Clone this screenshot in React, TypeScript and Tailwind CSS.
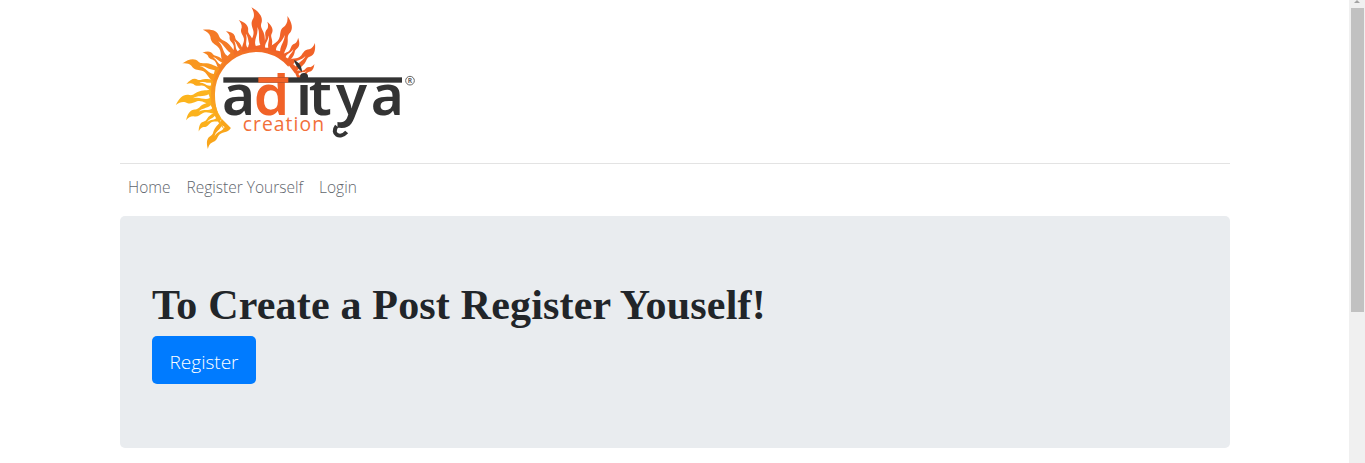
import React from 'react';

// angle from straight up, length scale, colour
const flames = [
  { a: -135, s: 0.95, c: '#f9a51a' },
  { a: -120, s: 0.8, c: '#fbb01c' },
  { a: -107, s: 1.0, c: '#fbb21c' },
  { a: -94, s: 1.2, c: '#fcb41d' },
  { a: -79, s: 0.85, c: '#fbaa1c' },
  { a: -64, s: 1.15, c: '#f9971f' },
  { a: -50, s: 0.75, c: '#f68523' },
  { a: -36, s: 1.25, c: '#f47a25' },
  { a: -23, s: 0.8, c: '#f26f27' },
  { a: -10, s: 1.0, c: '#f16628' },
  { a: 1, s: 1.35, c: '#f16228' },
  { a: 12, s: 0.9, c: '#f16228' },
  { a: 26, s: 1.25, c: '#f16228' },
  { a: 40, s: 0.8, c: '#f16228' },
  { a: 53, s: 1.05, c: '#f16228' },
  { a: 66, s: 0.65, c: '#f16228' },
];

const Logo: React.FC = () => (
  <svg width="270" height="160" viewBox="0 0 810 480">
    <defs>
      <linearGradient id="sunBand" x1="0.9" y1="0" x2="0" y2="0.9">
        <stop offset="0" stopColor="#f16228" />
        <stop offset="0.55" stopColor="#f47f24" />
        <stop offset="1" stopColor="#fcb41d" />
      </linearGradient>
    </defs>
    {flames.map((f, i) => (
      <g key={i} transform={`translate(290 280) rotate(${f.a}) translate(0 -134) scale(${f.s * 1.25} ${f.s})`}>
        <path
          d="M-16 6C-20 -14 -4 -22 -8 -40C-10 -50 -14 -56 -8 -68C-6 -76 -8 -84 -12 -92C2 -82 10 -70 6 -56C4 -46 10 -42 12 -30C14 -18 12 -8 16 6Z"
          fill={f.c}
        />
        <path d="M-3 -6C-8 -20 2 -30 -1 -48C5 -36 0 -24 5 -8Z" fill="#fff" />
      </g>
    ))}
    {/* crescent of the sun */}
    <path
      d="M392 186A142 142 0 1 0 196 392C176 360 164 320 165 280A125 125 0 0 1 385 200Z"
      fill="url(#sunBand)"
    />
    {/* wordmark */}
    <text
      x="186 281 408 446 528 632"
      y="345"
      fontFamily="'Noto Sans', sans-serif"
      fontSize="170"
      fontWeight="600"
      fill="#333333"
    >
      a<tspan fill="#f16228">d</tspan>itya
    </text>
    <rect x="190" y="232" width="536" height="16" fill="#333333" />
    <rect x="295" y="232" width="90" height="16" fill="#f16228" />
    <path d="M402 180C416 186 426 198 426 216C416 208 406 196 402 180Z" fill="#333333" />
    <path d="M560 396C540 418 512 402 530 378" fill="none" stroke="#333333" strokeWidth="12" />
    <text
      x="248"
      y="393"
      textLength="244"
      fontFamily="'Open Sans', sans-serif"
      fontSize="58"
      fill="#f26f3a"
    >
      creation
    </text>
    <circle cx="750" cy="242" r="13" fill="none" stroke="#666666" strokeWidth="3" />
    <text x="750" y="250" textAnchor="middle" fontFamily="'Noto Sans', sans-serif" fontSize="20" fontWeight="700" fill="#666666">
      R
    </text>
  </svg>
);

const App: React.FC = () => {
  return (
    <div className="flex h-[463px] overflow-hidden bg-white font-['Open_Sans',sans-serif]">
      <div className="flex-1">
        <div className="ml-[120px] w-[1110px]">
          <div className="h-[164px] border-b border-[#e3e3e3] pl-[40px]">
            <Logo />
          </div>

          <nav className="mb-1 flex h-12 items-center text-[15.5px] font-light text-[#5f666d]">
            <a className="px-2">Home</a>
            <a className="px-2">Register Yourself</a>
            <a className="px-2">Login</a>
          </nav>

          <div className="rounded-[5px] bg-[#e9ecef] px-8 py-16">
            <h1 className="mb-2 h-12 font-['Liberation_Serif',serif] text-[42px] leading-[50px] font-bold tracking-[0.18px] text-[#212529]">
              To Create a Post Register Youself!
            </h1>
            <button className="h-12 w-[104px] rounded-[5px] bg-[#007bff] pt-1 text-[19px] font-light text-white">
              Register
            </button>
          </div>
        </div>
      </div>

      {/* browser scrollbar */}
      <div className="w-4 bg-[#f0f0f0]">
        <svg width="16" height="8" viewBox="0 0 16 8" className="block">
          <path d="M5 3L8 0L11 3Z" fill="#a3a3a3" />
        </svg>
        <div className="ml-[2px] h-[304px] w-[13px] bg-[#c1c1c1]" />
      </div>
    </div>
  );
};

export default App;
